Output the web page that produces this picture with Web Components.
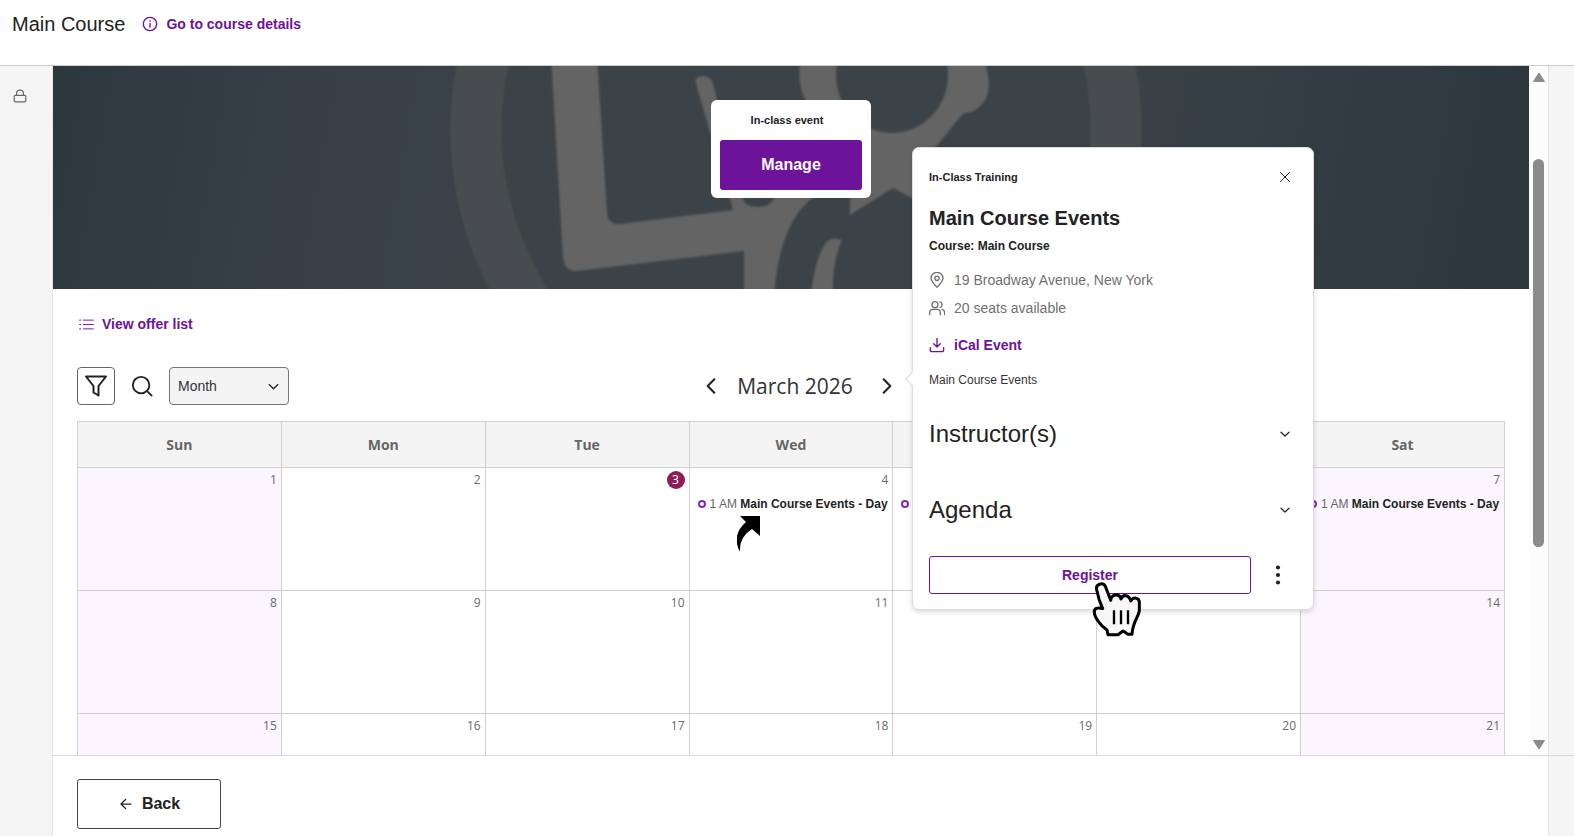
<!DOCTYPE html>
<html lang="en">
<head>
<meta charset="utf-8">
<title>Main Course</title>
<style>
  body {
    margin: 0;
    font-family: "Liberation Sans", Arial, sans-serif;
    color: #222;
    --accent: #6c129b;
    --line: #d0d0d3;
    --heading: "Open Sans", "Noto Sans", sans-serif;
  }
</style>
</head>
<body>
<course-app></course-app>

<script>
// Base class: open shadow root with a shared reset
class BaseElement extends HTMLElement {
  constructor() {
    super();
    this.attachShadow({ mode: 'open' });
    this.shadowRoot.innerHTML = `
      <style>
        *, *::before, *::after { box-sizing: border-box; }
        :host { display: block; box-sizing: border-box; }
        button { display: grid; place-items: center; font: inherit; color: inherit; background: none; border: 0; padding: 0; cursor: pointer; }
        h1, h2, h3, p { margin: 0; }
        a { color: var(--accent); text-decoration: none; font-weight: bold; }
        svg { display: block; flex: none; }
      </style>
      ${this.render()}
    `;
  }
  render() { return ''; }
}

// Icons, drawn on a 24px grid
const ICONS = {
  info: '<circle cx="12" cy="12" r="10"/><path d="M12 11v6M12 7v1"/>',
  lock: '<rect x="2" y="11" width="20" height="11" rx="2"/><path d="M6 11V8a6 6 0 0 1 12 0v3"/>',
  list: '<path d="M7 5h16M7 12h16M7 19h16M1 5h2M1 12h2M1 19h2"/>',
  filter: '<path d="M2 2.500h20L14.500 12v9.500l-5-3V12z"/>',
  search: '<circle cx="11" cy="11" r="9"/><path d="M17.500 17.500l5 5"/>',
  down: '<path d="M4 8.500l8 7.500 8-7.500"/>',
  left: '<path d="M16 4l-8 8 8 8"/>',
  right: '<path d="M8 4l8 8-8 8"/>',
  close: '<path d="M3 3l18 18M21 3L3 21"/>',
  pin: '<path d="M12 23c5-5 9-9 9-13.500a9 9 0 0 0-18 0C3 14 7 18 12 23z"/><circle cx="12" cy="9.500" r="3.200"/>',
  users: '<circle cx="9" cy="7" r="4.500"/><path d="M1 22v-3a5 5 0 0 1 5-5h6a5 5 0 0 1 5 5v3M16.500 2.700a4.500 4.500 0 0 1 0 8.600M23.500 22v-3a5 5 0 0 0-4-4.800"/>',
  download: '<path d="M12 2v12M7 10l5 5 5-5M2 16v3a3 3 0 0 0 3 3h14a3 3 0 0 0 3-3v-3"/>',
  back: '<path d="M22 12H3M11 3l-9 9 9 9"/>',
  dots: '<g fill="currentColor" stroke="none"><circle cx="12" cy="3" r="2.500"/><circle cx="12" cy="12" r="2.500"/><circle cx="12" cy="21" r="2.500"/></g>'
};

class UiIcon extends BaseElement {
  render() {
    const size = this.getAttribute('size') || 16;
    const weight = this.getAttribute('weight') || 2;
    return `
      <style>:host { display: inline-block; flex: none; }</style>
      <svg width="${size}" height="${size}" viewBox="0 0 24 24" fill="none" stroke="currentColor"
        stroke-width="${weight}" stroke-linecap="round" stroke-linejoin="round" aria-hidden="true">
        ${ICONS[this.getAttribute('name')]}
      </svg>
    `;
  }
}

class TopBar extends BaseElement {
  render() {
    return `
      <style>
        :host { display: flex; align-items: flex-start; gap: 17px; height: 66px; padding: 12px; background: #fff; border-bottom: 1px solid #ccc; }
        h1 { font-size: 20px; font-weight: normal; line-height: 24px; }
        a { display: flex; align-items: center; gap: 8px; font-size: 14px; line-height: 24px; }
      </style>
      <h1>Main Course</h1>
      <a href="#details"><ui-icon name="info"></ui-icon>Go to course details</a>
    `;
  }
}

class CourseBanner extends BaseElement {
  render() {
    return `
      <style>
        :host { display: grid; height: 223px; overflow: hidden; background: linear-gradient(100deg, #2d383e, #383f47 18%, #3b4349 32%, #3b4349 68%, #343c43 85%, #2b373d); }
        .art { grid-area: 1 / 1; width: 100%; height: 223px; }
        .shapes { filter: blur(1px); }
        .card { grid-area: 1 / 1; position: relative; justify-self: center; align-self: start; width: 160px; margin-top: 34px; padding: 8px 9px; border-radius: 6px; background: #fff; text-align: center; }
        p { padding-right: 8px; font-size: 11px; font-weight: bold; line-height: 24px; margin-bottom: 8px; }
        button { width: 100%; height: 50px; border-radius: 3px; background: var(--accent); color: #fff; font-size: 16px; font-weight: bold; }
      </style>
      <svg class="art" viewBox="53 66 1476 223" preserveAspectRatio="xMidYMid slice" aria-hidden="true">
        <g class="shapes">
          <circle cx="796" cy="130" r="320" fill="none" stroke="#474d4f" stroke-width="51"/>
          <g fill="#646464">
            <path d="M551 56H597L607 213Q608 225 620 224L733 210L696 84Q694 76 703 76Q711 76 713 84L743 199Q746 208 760 207Q772 206 775 196V140L806 101Q796 84 801 56H982Q998 94 977 109Q971 113 965 113Q961 115 957 121L925 160V205L893 188L850 215V196H815Q780 220 774 295H744V251L577 271Q565 272 563 258Z"/>
            <path d="M825 244Q830 236 842 240Q832 262 833 295H811Q814 262 825 244Z"/>
          </g>
          <ellipse cx="892" cy="75" rx="56" ry="58" fill="#3b4349"/>
        </g>
      </svg>
      <div class="card">
        <p>In-class event</p>
        <button type="button">Manage</button>
      </div>
    `;
  }
}

class CalendarToolbar extends BaseElement {
  render() {
    return `
      <style>
        :host { display: grid; grid-template-columns: 1fr auto 1fr; align-items: center; }
        .tools { display: flex; gap: 8px; }
        .tools button { width: 38px; height: 38px; }
        .tools .boxed { border: 1px solid #666; border-radius: 4px; }
        .view { display: grid; align-items: center; width: 120px; }
        select { grid-area: 1 / 1; appearance: none; width: 100%; height: 38px; padding: 0 8px; border: 1px solid #777; border-radius: 4px; background: #f4f4f4; color: #333; font: 14px "Liberation Sans", Arial, sans-serif; }
        .view ui-icon { grid-area: 1 / 1; justify-self: end; margin-right: 9px; pointer-events: none; }
        .month { display: flex; align-items: center; gap: 16px; padding-left: 16px; }
        h2 { padding-right: 8px; font-family: var(--heading); font-size: 21px; font-weight: normal; line-height: 28px; color: #333; }
      </style>
      <div class="tools">
        <button class="boxed" type="button" aria-label="Filter"><ui-icon name="filter" size="24"></ui-icon></button>
        <button type="button" aria-label="Search"><ui-icon name="search" size="22"></ui-icon></button>
        <label class="view">
          <select aria-label="Calendar view"><option>Month</option><option>Week</option><option>Day</option></select>
          <ui-icon name="down" size="13" weight="2.5"></ui-icon>
        </label>
      </div>
      <div class="month">
        <button type="button" aria-label="Previous month"><ui-icon name="left" size="20" weight="2.5"></ui-icon></button>
        <h2>March 2026</h2>
        <button type="button" aria-label="Next month"><ui-icon name="right" size="20" weight="2.5"></ui-icon></button>
      </div>
    `;
  }
}

class CalendarEvent extends BaseElement {
  render() {
    return `
      <style>
        :host { display: flex; align-items: center; gap: 4px; padding: 0 4px 0 8px; font-size: 12px; line-height: 16px; white-space: nowrap; color: #666; }
        i { flex: none; width: 8px; height: 8px; border: 2px solid #8228b4; border-radius: 50%; }
        b { color: #222; }
        :host([compact]) { height: 16px; }
      </style>
      <i></i>${this.hasAttribute('compact') ? '' : '<span>1 AM <b><slot></slot></b></span>'}
    `;
  }
}

class MonthCalendar extends BaseElement {
  render() {
    const days = ['Sun', 'Mon', 'Tue', 'Wed', 'Thu', 'Fri', 'Sat'];
    const today = 3;
    const events = [4, 5, 7];
    // The open popover lies over these, so their labels are left out
    const coveredHeads = ['Thu', 'Fri'];
    const coveredDays = [5, 6, 12, 13];
    const head = (day) => `<th scope="col" aria-label="${day}">${coveredHeads.includes(day) ? '' : day}</th>`;
    const cell = (day) => {
      const covered = coveredDays.includes(day);
      return `
      <td>
        <span class="num${day === today ? ' today' : ''}">${covered ? '' : day}</span>
        ${events.includes(day) ? `<calendar-event${covered ? ' compact' : ''}>${covered ? '' : 'Main Course Events - Day'}</calendar-event>` : ''}
      </td>`;
    };
    const row = (start) => `<tr>${days.map((_, i) => cell(start + i)).join('')}</tr>`;
    return `
      <style>
        table { width: 100%; table-layout: fixed; border-collapse: collapse; }
        th, td { padding: 0; border: 1px solid var(--line); }
        th { height: 46px; background: #f4f4f4; color: #666; font: bold 14px var(--heading); }
        td { height: 123px; vertical-align: top; overflow: hidden; }
        td:first-child, td:last-child { background: #faf5fe; }
        .num { display: block; width: fit-content; height: 18px; margin: 3px 4px 7px auto; color: #6a6a6a; font-family: var(--heading); font-size: 12px; line-height: 18px; }
        .today { width: 18px; border-radius: 50%; background: #8c1d58; color: #fff; text-align: center; }
      </style>
      <table>
        <thead><tr>${days.map(head).join('')}</tr></thead>
        <tbody>${[1, 8, 15].map(row).join('')}</tbody>
      </table>
    `;
  }
}

class ScrollRail extends BaseElement {
  render() {
    return `
      <style>
        :host { display: flex; flex-direction: column; align-items: center; padding: 6px 0 5px; background: #fcfcfc; color: #8b8b8b; }
        .track { flex: 1; display: grid; grid-template-rows: 76fr 388fr 192fr; width: 11px; }
        .thumb { grid-row: 2; border-radius: 6px; background: #8b8b8b; }
      </style>
      <svg width="12" height="11" viewBox="0 0 12 11"><path d="M6 1L11.500 9.500H.5Z" fill="currentColor" stroke="currentColor" stroke-linejoin="round"/></svg>
      <div class="track"><div class="thumb"></div></div>
      <svg width="12" height="11" viewBox="0 0 12 11"><path d="M6 10L11.500 1.500H.5Z" fill="currentColor" stroke="currentColor" stroke-linejoin="round"/></svg>
    `;
  }
}

class EventPopover extends BaseElement {
  render() {
    return `
      <style>
        :host { width: 402px; padding: 17px 16px 15px; border: 1px solid #ddd; border-radius: 7px; background: #fff; box-shadow: 0 2px 5px rgba(0, 0, 0, .15); }
        /* arrow that points at the day */
        :host::before { content: ""; position: absolute; left: -6px; top: 226px; width: 10px; height: 10px; border: solid #ddd; border-width: 0 0 1px 1px; background: #fff; transform: rotate(45deg); }
        header { display: flex; align-items: center; justify-content: space-between; padding-right: 6px; font-size: 11px; font-weight: bold; line-height: 24px; }
        h2 { margin-top: 17px; font-size: 20px; line-height: 24px; }
        .course { margin-top: 8px; font-size: 12px; font-weight: bold; line-height: 16px; }
        .fact, .ical { display: flex; align-items: center; gap: 9px; font-size: 14px; line-height: 20px; }
        .fact { margin-top: 8px; color: #707070; }
        .course + .fact { margin-top: 16px; }
        .ical { width: fit-content; margin-top: 17px; }
        .note { margin-top: 17px; font-size: 12px; line-height: 16px; color: #333; }
        .fold { display: flex; align-items: center; justify-content: space-between; width: 100%; margin-top: 32px; padding-right: 6px; font-size: 24px; line-height: 28px; }
        .fold + .fold { margin-top: 48px; }
        .actions { display: flex; align-items: center; gap: 17px; margin-top: 32px; padding-right: 9px; }
        .register { flex: 1; height: 38px; border: 1px solid var(--accent); border-radius: 3px; color: var(--accent); font-size: 14px; font-weight: bold; }
      </style>
      <header>In-Class Training
        <button type="button" aria-label="Close"><ui-icon name="close" size="12"></ui-icon></button>
      </header>
      <h2>Main Course Events</h2>
      <p class="course">Course: Main Course</p>
      <p class="fact"><ui-icon name="pin"></ui-icon>19 Broadway Avenue, New York</p>
      <p class="fact"><ui-icon name="users"></ui-icon>20 seats available</p>
      <a class="ical" href="#ical"><ui-icon name="download"></ui-icon>iCal Event</a>
      <p class="note">Main Course Events</p>
      <button class="fold" type="button">Instructor(s)<ui-icon name="down" size="12" weight="2.5"></ui-icon></button>
      <button class="fold" type="button">Agenda<ui-icon name="down" size="12" weight="2.5"></ui-icon></button>
      <div class="actions">
        <button class="register" type="button">Register</button>
        <button type="button" aria-label="More"><ui-icon name="dots" size="20"></ui-icon></button>
      </div>
    `;
  }
}

// Tutorial markers that lie over the page
class HandPointer extends BaseElement {
  render() {
    return `
      <svg width="70" height="70" viewBox="0 0 210 210" aria-hidden="true">
        <path d="M50 44C46 28 68 20 76 34L92 76C94 56 118 54 123 72C129 56 148 60 152 78C160 64 178 68 178 82V106C177 124 158 140 156 178H144L129 168L114 179H84L81 165C62 152 44 128 43 112C42 100 52 96 68 101C62 88 53 60 50 44Z"
          fill="#f7f7f7" stroke="#000" stroke-width="9" stroke-linejoin="round"/>
        <path d="M102 106V148M123 106V148M144 106V148" fill="none" stroke="#000" stroke-width="7"/>
      </svg>
    `;
  }
}

class ArrowPointer extends BaseElement {
  render() {
    return `
      <svg width="24" height="36" viewBox="0 0 24 36" aria-hidden="true">
        <path d="M3 0H23V20L15 13Q2 21 3 36Q-6 19 9 6Z" fill="#000"/>
      </svg>
    `;
  }
}

class CourseApp extends BaseElement {
  render() {
    return `
      <style>
        :host { display: flex; flex-direction: column; height: 100vh; min-height: 480px; overflow: hidden; background: #fff; }
        .shell { flex: 1; min-height: 0; display: grid; grid-template-columns: 53px 1fr 26px; }
        .rail { display: flex; flex-direction: column; background: #f5f5f5; color: #666; }
        .rail.left { align-items: flex-start; padding: 23px 13px; }
        .rail.right { border-left: 1px solid #e4e4e4; }
        .rail.right::before { content: ""; flex: 1; border-bottom: 1px solid #e2d5d9; }
        .rail.right::after { content: ""; height: 80px; }
        main { display: flex; flex-direction: column; min-width: 0; min-height: 0; }
        .view { position: relative; flex: 1; min-height: 0; display: grid; grid-template-columns: 1fr 19px; grid-template-rows: minmax(0, 1fr); }
        .content { overflow: hidden; border-left: 1px solid #e4e4e4; margin-left: -1px; }
        .body { padding: 25px 24px; }
        .offers { display: flex; align-items: center; gap: 8px; width: fit-content; padding-left: 2px; font-size: 14px; line-height: 20px; }
        calendar-toolbar { margin: 33px 0 16px; }
        event-popover { position: absolute; left: 859px; top: 81px; }
        hand-pointer { position: absolute; left: 1027px; top: 509px; }
        arrow-pointer { position: absolute; left: 684px; top: 450px; }
        footer { height: 81px; padding: 23px 24px; border-top: 1px solid #ddd4dd; border-left: 1px solid #e4e4e4; margin-left: -1px; }
        .back { display: flex; align-items: center; justify-content: center; gap: 10px; width: 144px; height: 50px; padding-left: 2px; border: 1px solid #444; border-radius: 3px; font-size: 16px; font-weight: bold; }
      </style>
      <top-bar></top-bar>
      <div class="shell">
        <aside class="rail left"><ui-icon name="lock" size="14"></ui-icon></aside>
        <main>
          <div class="view">
            <div class="content">
              <course-banner></course-banner>
              <div class="body">
                <a class="offers" href="#offers"><ui-icon name="list" size="15" weight="1.5"></ui-icon>View offer list</a>
                <calendar-toolbar></calendar-toolbar>
                <month-calendar></month-calendar>
              </div>
            </div>
            <scroll-rail></scroll-rail>
            <event-popover></event-popover>
            <arrow-pointer></arrow-pointer>
            <hand-pointer></hand-pointer>
          </div>
          <footer>
            <button class="back" type="button"><ui-icon name="back" size="12" weight="2.5"></ui-icon>Back</button>
          </footer>
        </main>
        <aside class="rail right"></aside>
      </div>
    `;
  }
}

// Register all components
customElements.define('ui-icon', UiIcon);
customElements.define('top-bar', TopBar);
customElements.define('course-banner', CourseBanner);
customElements.define('calendar-toolbar', CalendarToolbar);
customElements.define('calendar-event', CalendarEvent);
customElements.define('month-calendar', MonthCalendar);
customElements.define('scroll-rail', ScrollRail);
customElements.define('event-popover', EventPopover);
customElements.define('hand-pointer', HandPointer);
customElements.define('arrow-pointer', ArrowPointer);
customElements.define('course-app', CourseApp);
</script>
</body>
</html>
